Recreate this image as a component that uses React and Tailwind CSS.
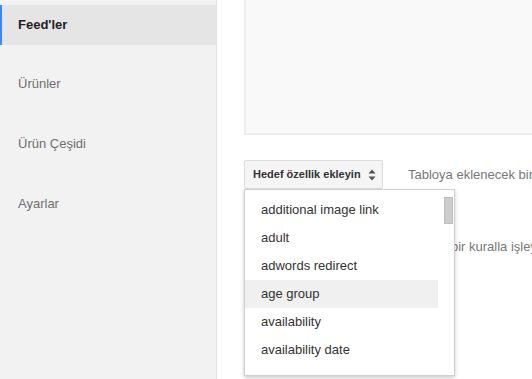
import React from 'react'

const menu = ["Ürünler", "Ürün Çeşidi", "Ayarlar"]
const options = ["additional image link", "adult", "adwords redirect", "age group", "availability", "availability date"]

function SortIcon() {
    return (
        <svg width="8" height="12" viewBox="0 0 8 12" className="text-[#555]">
            <path d="M4 0.5 L7.5 4.5 L0.5 4.5 Z" fill="currentColor" />
            <path d="M4 11.5 L7.5 7.5 L0.5 7.5 Z" fill="currentColor" />
        </svg>
    )
}

export default function App() {
    return (
        <div className="flex h-screen w-full overflow-hidden bg-white font-['Liberation_Sans',Arial,sans-serif]">
            {/* sidebar */}
            <div className="w-[217px] shrink-0 border-r border-[#e4e4e4] bg-[#f2f2f2] pt-[5px]">
                <div className="flex h-[40px] items-center border-l-2 border-[#4285f4] bg-[#e5e5e5] pl-[16px] text-[13px] font-bold text-[#222]">
                    Feed'ler
                </div>
                <div className="mt-[9px]">
                    {menu.map((item) => (
                        <div key={item} className="flex h-[60px] items-center pl-[18px] text-[13px] text-[#6f6f6f]">
                            {item}
                        </div>
                    ))}
                </div>
            </div>

            {/* content */}
            <div className="min-w-0 flex-1 pl-[27px]">
                <div className="h-[135px] border-b-2 border-l-2 border-[#ebebeb] bg-[#f9f9f9]" />

                <div className="mt-[25px] flex items-center">
                    <div className="relative">
                        <button className="flex h-[29px] w-[139px] items-center rounded-[2px] border border-[#dcdcdc] bg-[#f5f5f5] pl-[8px] text-[11px] font-bold text-[#333]">
                            Hedef özellik ekleyin
                            <span className="ml-[7px] flex items-center">
                                <SortIcon />
                            </span>
                        </button>

                        <div className="absolute left-0 top-full z-10 flex h-[187px] w-[211px] border border-[#cfcfcf] bg-white shadow-[0_2px_4px_rgba(0,0,0,0.2)]">
                            <ul className="flex-1 pt-[6px]">
                                {options.map((opt) => (
                                    <li
                                        key={opt}
                                        className={`flex h-[28px] items-center pl-[16px] text-[13px] text-[#333] ${opt === "age group" ? "bg-[#f0f0f0]" : ""}`}
                                    >
                                        {opt}
                                    </li>
                                ))}
                            </ul>
                            <div className="w-[16px] pt-[7px]">
                                <div className="ml-[6px] h-[27px] w-[9px] border border-[#bdbdbd] bg-[#cdcdcd]" />
                            </div>
                        </div>
                    </div>
                    <p className="ml-[25px] whitespace-nowrap text-[13px] text-[#777]">
                        Tabloya eklenecek bir özellik seçin
                    </p>
                </div>

                <p className="mt-[48px] whitespace-nowrap pl-[207px] text-[13px] text-[#777]">
                    bir kuralla işleyin
                </p>
            </div>
        </div>
    )
}
